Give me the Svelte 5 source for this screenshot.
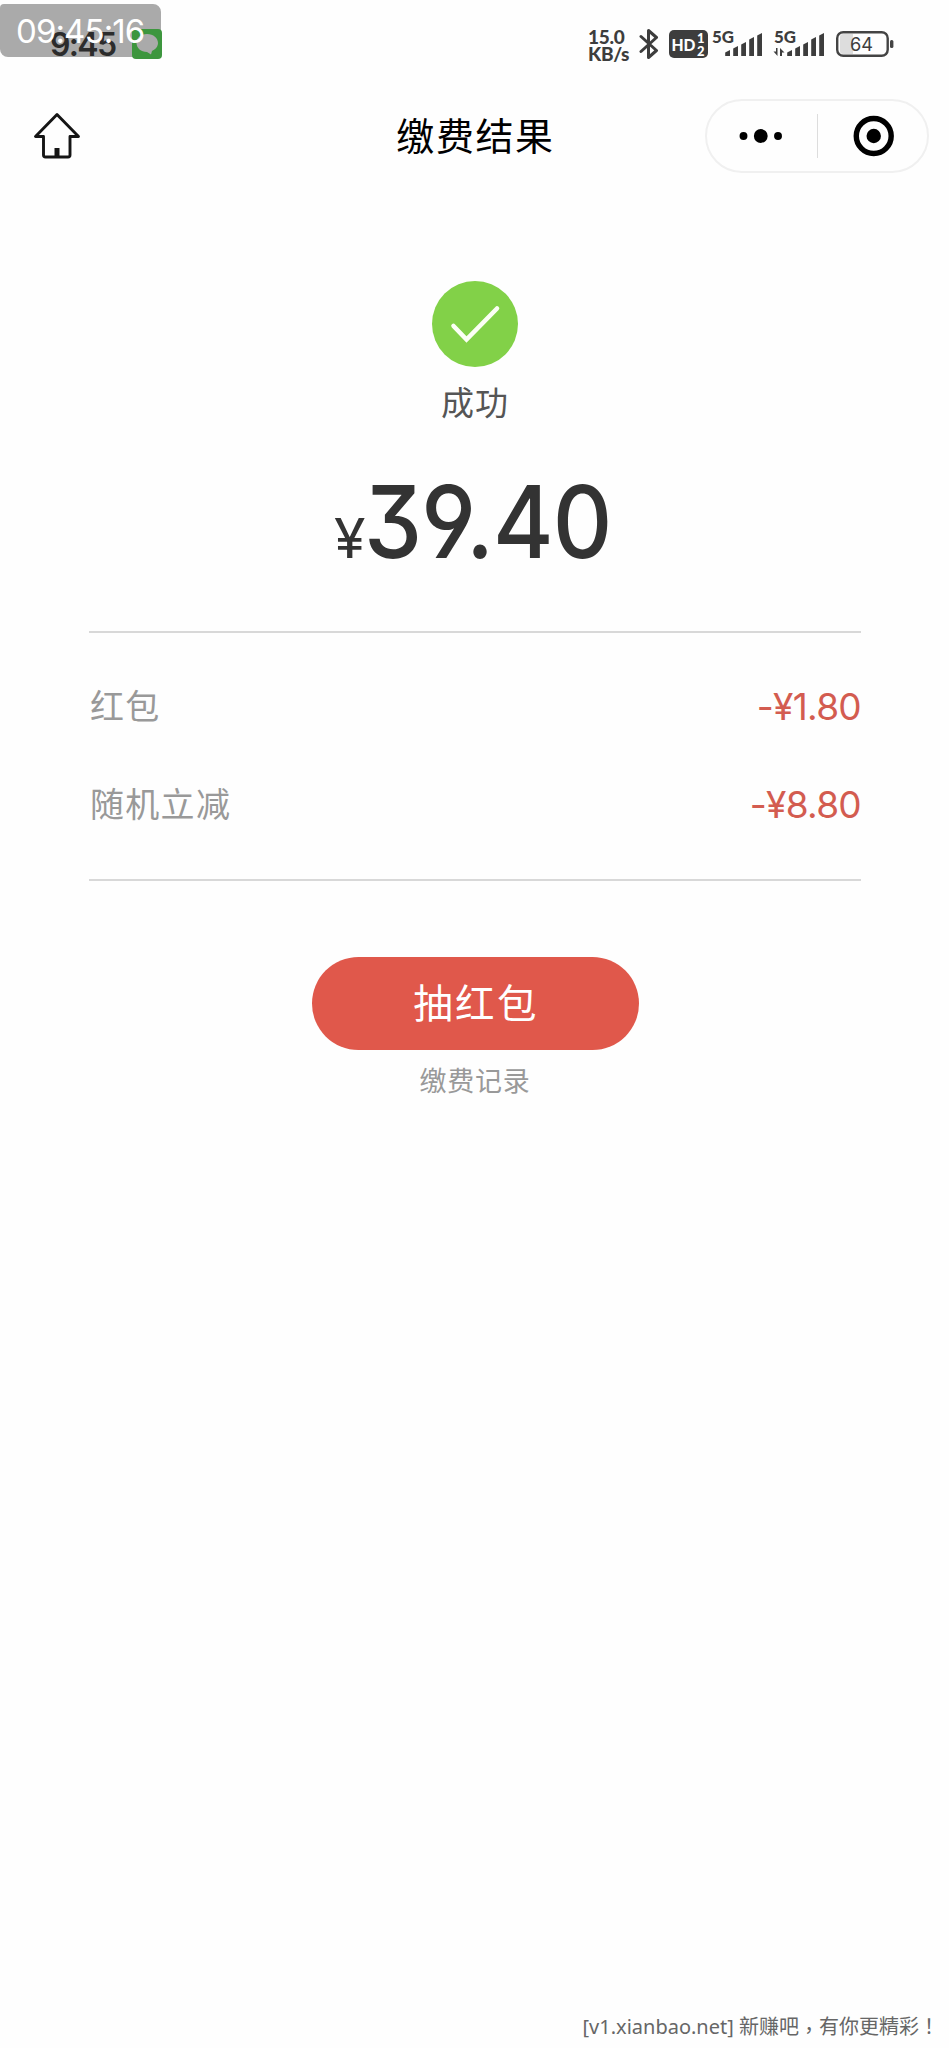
<script>
	const amount = '39.40'
	const discounts = [
		{name: '红包', value: '1.80'},
		{name: '随机立减', value: '8.80'}
	]

	// left edge and top of every signal bar
	const bars = [[0, 17], [8, 13], [16, 9], [24, 4], [32, 0]]
</script>

<div class="screen">
	<div class="status">
		<div class="clock">
			<span class="time">9:45</span>
			<svg class="message" width="30" height="30" viewBox="0 0 30 30">
				<rect width="30" height="30" rx="4" fill="#3d963e"/>
				<path d="M15 5C8.400 5 4.500 9 4.500 14s4.500 9 10.500 9l4 2.500 1-3.500c3.500-1.500 6-4.500 6-8 0-5-4.500-9-11-9z" fill="#aaa"/>
			</svg>
			<div class="stamp"></div>
			<span class="record-time">09:45:16</span>
		</div>
		<div class="signals">
			<div class="speed"><span>15.0</span><span>KB/s</span></div>
			<svg class="bluetooth" width="20" height="32" viewBox="0 0 20 32">
				<path d="M2 8.500l15.500 14-8 7V2.500l8 7-15.500 14" fill="none" stroke="#3d3d3d" stroke-width="3" stroke-linejoin="round" stroke-linecap="round"/>
			</svg>
			<svg class="hd" width="39" height="28" viewBox="0 0 39 28">
				<rect width="39" height="28" rx="5" fill="#3d3d3d"/>
				<text x="2.500" y="20.500" font-size="17.500" textLength="24" lengthAdjust="spacingAndGlyphs">HD</text>
				<text x="28" y="13" font-size="13">1</text>
				<text x="28" y="25.500" font-size="13">2</text>
			</svg>
			<svg class="network" width="51" height="28" viewBox="0 0 51 28">
				<text x="0" y="12.500" font-size="17" textLength="22" lengthAdjust="spacingAndGlyphs">5G</text>
				{#each bars as [x, y]}
					<path d="M{x + 13.2} {y + 5.5}l4.800-2.500V26h-4.800z"/>
				{/each}
			</svg>
			<svg class="network second" width="51" height="28" viewBox="0 0 51 28">
				<text x="0" y="12.500" font-size="17" textLength="22" lengthAdjust="spacingAndGlyphs">5G</text>
				<path d="M3.500 18v8l-4-4.500h2.500V18zM6 26v-8l4.500 4.500H8V26z"/>
				{#each bars as [x, y]}
					<path d="M{x + 13.2} {y + 5.5}l4.800-2.500V26h-4.800z"/>
				{/each}
			</svg>
			<svg class="battery" width="58" height="26" viewBox="0 0 58 26">
				<path d="M7 3h10v20H7a3 3 0 0 1-3-3V6a3 3 0 0 1 3-3z" fill="#ddd"/>
				<rect x="1.200" y="1.200" width="50.500" height="23.600" rx="6" fill="none" stroke="#444" stroke-width="2.400"/>
				<rect x="54" y="9" width="3.400" height="8" rx="1.500" fill="#444"/>
				<text x="14" y="19.800" font-size="19" textLength="23" lengthAdjust="spacingAndGlyphs">64</text>
			</svg>
		</div>
	</div>

	<header>
		<svg class="home" width="48" height="48" viewBox="0 0 48 48">
			<path d="M24 2.500L2.500 24.500h8V43a2 2 0 0 0 2 2h22.500a2 2 0 0 0 2-2V24.500h8.500z" fill="none" stroke="#151515" stroke-width="2.900" stroke-linejoin="round"/>
			<rect x="21.500" y="36" width="5" height="9" fill="#151515"/>
		</svg>
		<h1>缴费结果</h1>
		<div class="capsule">
			<svg width="111" height="72" viewBox="0 0 111 72">
				<circle cx="37" cy="36" r="4"/>
				<circle cx="54.500" cy="36" r="7"/>
				<circle cx="72" cy="36" r="4"/>
			</svg>
			<i></i>
			<svg width="111" height="72" viewBox="0 0 111 72">
				<circle cx="56.500" cy="36" r="17.700" fill="none" stroke="#000" stroke-width="5.500"/>
				<circle cx="56.500" cy="36" r="7.300"/>
			</svg>
		</div>
	</header>

	<main>
		<svg class="check" width="86" height="86" viewBox="0 0 86 86">
			<circle cx="43" cy="43" r="43" fill="#82d148"/>
			<path d="M21.500 45l13 13.500L65 27.500" fill="none" stroke="#fbfff5" stroke-width="4.600" stroke-linecap="round"/>
		</svg>
		<p class="state">成功</p>
		<div class="amount"><small>¥</small><span>{amount}</span></div>

		<div class="discounts">
			{#each discounts as item}
				<div class="row">
					<span class="name">{item.name}</span>
					<span class="value">-¥{item.value}</span>
				</div>
			{/each}
		</div>

		<button>抽红包</button>
		<a class="records" href="#records">缴费记录</a>
	</main>

	<footer>[v1.xianbao.net] 新赚吧<span>，</span>有你更精彩！</footer>
</div>

<style>
	:global(body) {
		background: #fefefe;
	}
	.screen {
		width: 949px;
		height: 2048px;
		display: flex;
		flex-direction: column;
		background: #fefefe;
		font-family: "Noto Sans CJK SC", sans-serif;
		overflow: hidden;
	}
	.status {
		height: 90px;
		display: flex;
		justify-content: space-between;
		font-family: Inter, sans-serif;
	}
	.clock {
		position: relative;
		width: 170px;
		height: 70px;
	}
	.stamp {
		position: absolute;
		left: 0;
		top: 4px;
		width: 161px;
		height: 53px;
		border-radius: 4px 8px 8px 8px;
		background: #aaa;
	}
	.record-time {
		position: absolute;
		z-index: 2;
		left: 16px;
		top: 10px;
		font-size: 33px;
		line-height: 42px;
		letter-spacing: -0.900px;
		color: #fff;
		white-space: nowrap;
	}
	.time {
		position: absolute;
		z-index: 1;
		left: 50px;
		top: 25px;
		font-size: 32px;
		line-height: 40px;
		letter-spacing: -1.700px;
		font-weight: 600;
		color: #2c2c2c;
	}
	.message {
		position: absolute;
		z-index: 1;
		left: 132px;
		top: 29px;
	}
	.signals {
		display: flex;
		align-items: flex-start;
		padding: 28px 55px 0 0;
	}
	.speed {
		display: flex;
		flex-direction: column;
		width: 51px;
		font-family: Lato, sans-serif;
		font-size: 19px;
		line-height: 17px;
		font-weight: 900;
		letter-spacing: -0.300px;
		color: #3d3d3d;
	}
	.hd {
		margin: 2px 4px 0 10px;
	}
	.signals text {
		font-family: Lato, sans-serif;
		font-weight: 900;
		fill: #3d3d3d;
	}
	.signals .hd text {
		fill: #fff;
	}
	.signals .battery text {
		font-family: Inter, sans-serif;
		font-weight: normal;
	}
	.network {
		margin-top: 2px;
		fill: #3d3d3d;
		overflow: visible;
	}
	.second {
		margin-left: 11px;
	}
	.battery {
		margin: 3px 0 0 11px;
	}
	header {
		height: 92px;
		display: flex;
		align-items: center;
		justify-content: space-between;
		padding: 0 20px 0 33px;
	}
	h1 {
		margin: 0 0 4px 165px;
		font-size: 38px;
		line-height: 56px;
		font-weight: normal;
		letter-spacing: 1.600px;
		color: #000;
	}
	.capsule {
		box-sizing: border-box;
		width: 224px;
		height: 74px;
		display: flex;
		align-items: center;
		border: 2px solid #f0f0f0;
		border-radius: 37px;
	}
	.capsule i {
		flex: none;
		width: 1px;
		height: 44px;
		background: #ddd;
	}
	.capsule svg {
		min-width: 0;
	}
	main {
		flex: 1;
		display: flex;
		flex-direction: column;
		align-items: center;
		padding: 99px 0 0 1px;
	}
	.check {
		display: block;
	}
	.state {
		margin: 10px 0 0;
		font-size: 33px;
		line-height: 48px;
		letter-spacing: 1px;
		color: #555;
	}
	.amount {
		display: flex;
		align-items: baseline;
		width: 284px;
		height: 120px;
		margin-top: 36px;
		font-family: Inter, sans-serif;
		color: #333;
	}
	/* condensed digits with a flat three and an open nine */
	.amount span {
		font-size: 101px;
		line-height: 120px;
		font-weight: 500;
		letter-spacing: -1px;
		font-feature-settings: "cv09" 1, "cv04" 1;
		transform: scaleX(0.915);
		transform-origin: left;
	}
	.amount small {
		width: 40px;
		margin-left: 1px;
		font-size: 55px;
		transform: scaleX(1.04);
		transform-origin: left;
	}
	.discounts {
		box-sizing: border-box;
		width: 772px;
		height: 250px;
		margin-top: 50px;
		padding-top: 24px;
		border-top: 2px solid #d8d8d8;
		border-bottom: 2px solid #d8d8d8;
	}
	.row {
		display: flex;
		align-items: center;
		justify-content: space-between;
		height: 98px;
	}
	.name {
		margin-bottom: 3px;
		padding-left: 1px;
		font-size: 34px;
		letter-spacing: 1.300px;
		color: #999;
	}
	.value {
		margin-top: 1px;
		font-family: Inter, sans-serif;
		font-size: 37px;
		letter-spacing: -0.700px;
		color: #d35c50;
	}
	button {
		width: 327px;
		height: 93px;
		margin-top: 76px;
		padding: 0 0 7px 2px;
		border: 0;
		border-radius: 47px;
		background: #e0584b;
		color: #fff;
		font-family: inherit;
		font-size: 39.500px;
		letter-spacing: 2.400px;
	}
	.records {
		margin-top: 10px;
		font-size: 27px;
		line-height: 40px;
		letter-spacing: 0.700px;
		color: #999;
		text-decoration: none;
	}
	footer {
		height: 42px;
		padding-right: 10px;
		font-family: "Noto Sans", "Noto Sans CJK TC", sans-serif;
		font-size: 20px;
		line-height: 42px;
		text-align: right;
		color: #666;
	}
	footer span {
		display: inline-block;
		line-height: 20px;
		vertical-align: -4px;
	}
</style>
